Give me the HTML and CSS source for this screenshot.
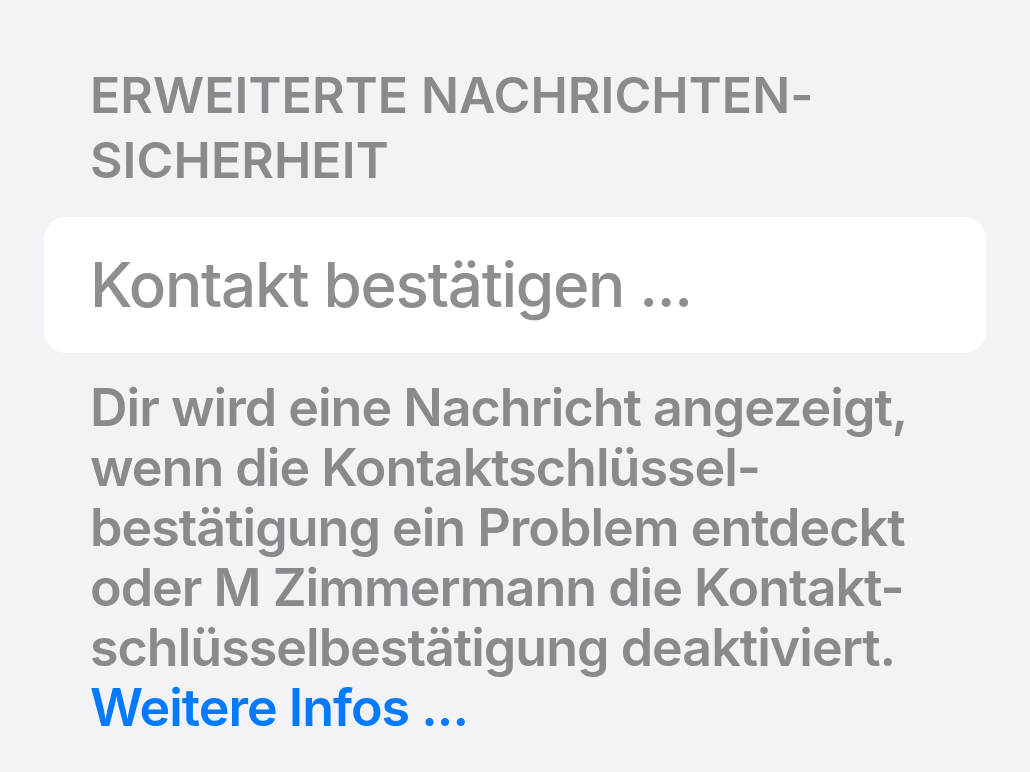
FILE: index.html
```html
<!DOCTYPE html>
<html lang="de">

<head>
    <meta charset="UTF-8">
    <meta name="viewport" content="width=device-width, initial-scale=1.0">
    <title>Erweiterte Nachrichtensicherheit</title>
    <link rel="stylesheet" href="styles.css">
</head>

<body>
    <div class="settings">
        <!-- Abschnittstitel -->
        <h2 class="section_title">ERWEITERTE NACHRICHTEN-<br>SICHERHEIT</h2>
        <!-- Zelle -->
        <div class="cell_group">
            <a class="cell" href="">Kontakt bestätigen ...</a>
        </div>
        <!-- Fußzeile -->
        <p class="section_footer">
            Dir wird eine Nachricht angezeigt,<br>
            wenn die Kontaktschlüssel-<br>
            bestätigung ein Problem entdeckt<br>
            oder M Zimmermann die Kontakt-<br>
            schlüsselbestätigung deaktiviert.<br>
            <a href="" class="more">Weitere Infos ...</a>
        </p>
    </div>
</body>

</html>
```

FILE: styles.css
```css
* {
    padding: 0;
    margin: 0;
    list-style: none;
    outline: none;
    text-decoration: none;
}

body {
    background: #F2F2F7;
    font-family: Inter, "Liberation Sans", sans-serif;
    font-weight: 600;
}

.settings {
    width: 942px;
    padding: 63px 44px 0;
}

.section_title {
    padding-left: 46px;
    font-size: 50px;
    font-weight: 600;
    line-height: 65px;
    letter-spacing: 0.1px;
    color: #8A8A8E;
}

.cell_group {
    margin-top: 24px;
    background: #FFFFFF;
    border-radius: 22px;
    height: 136px;
    display: flex;
    align-items: center;
}

.cell {
    display: block;
    padding-left: 46px;
    padding-bottom: 2px;
    font-size: 62px;
    font-weight: 500;
    letter-spacing: -1.3px;
    color: #8E8E8E;
}

.section_footer {
    margin-top: 25px;
    padding-left: 46px;
    font-size: 52px;
    line-height: 60px;
    letter-spacing: -1px;
    color: #8A8A8E;
}

.section_footer>.more {
    color: #007AFF;
}
```
